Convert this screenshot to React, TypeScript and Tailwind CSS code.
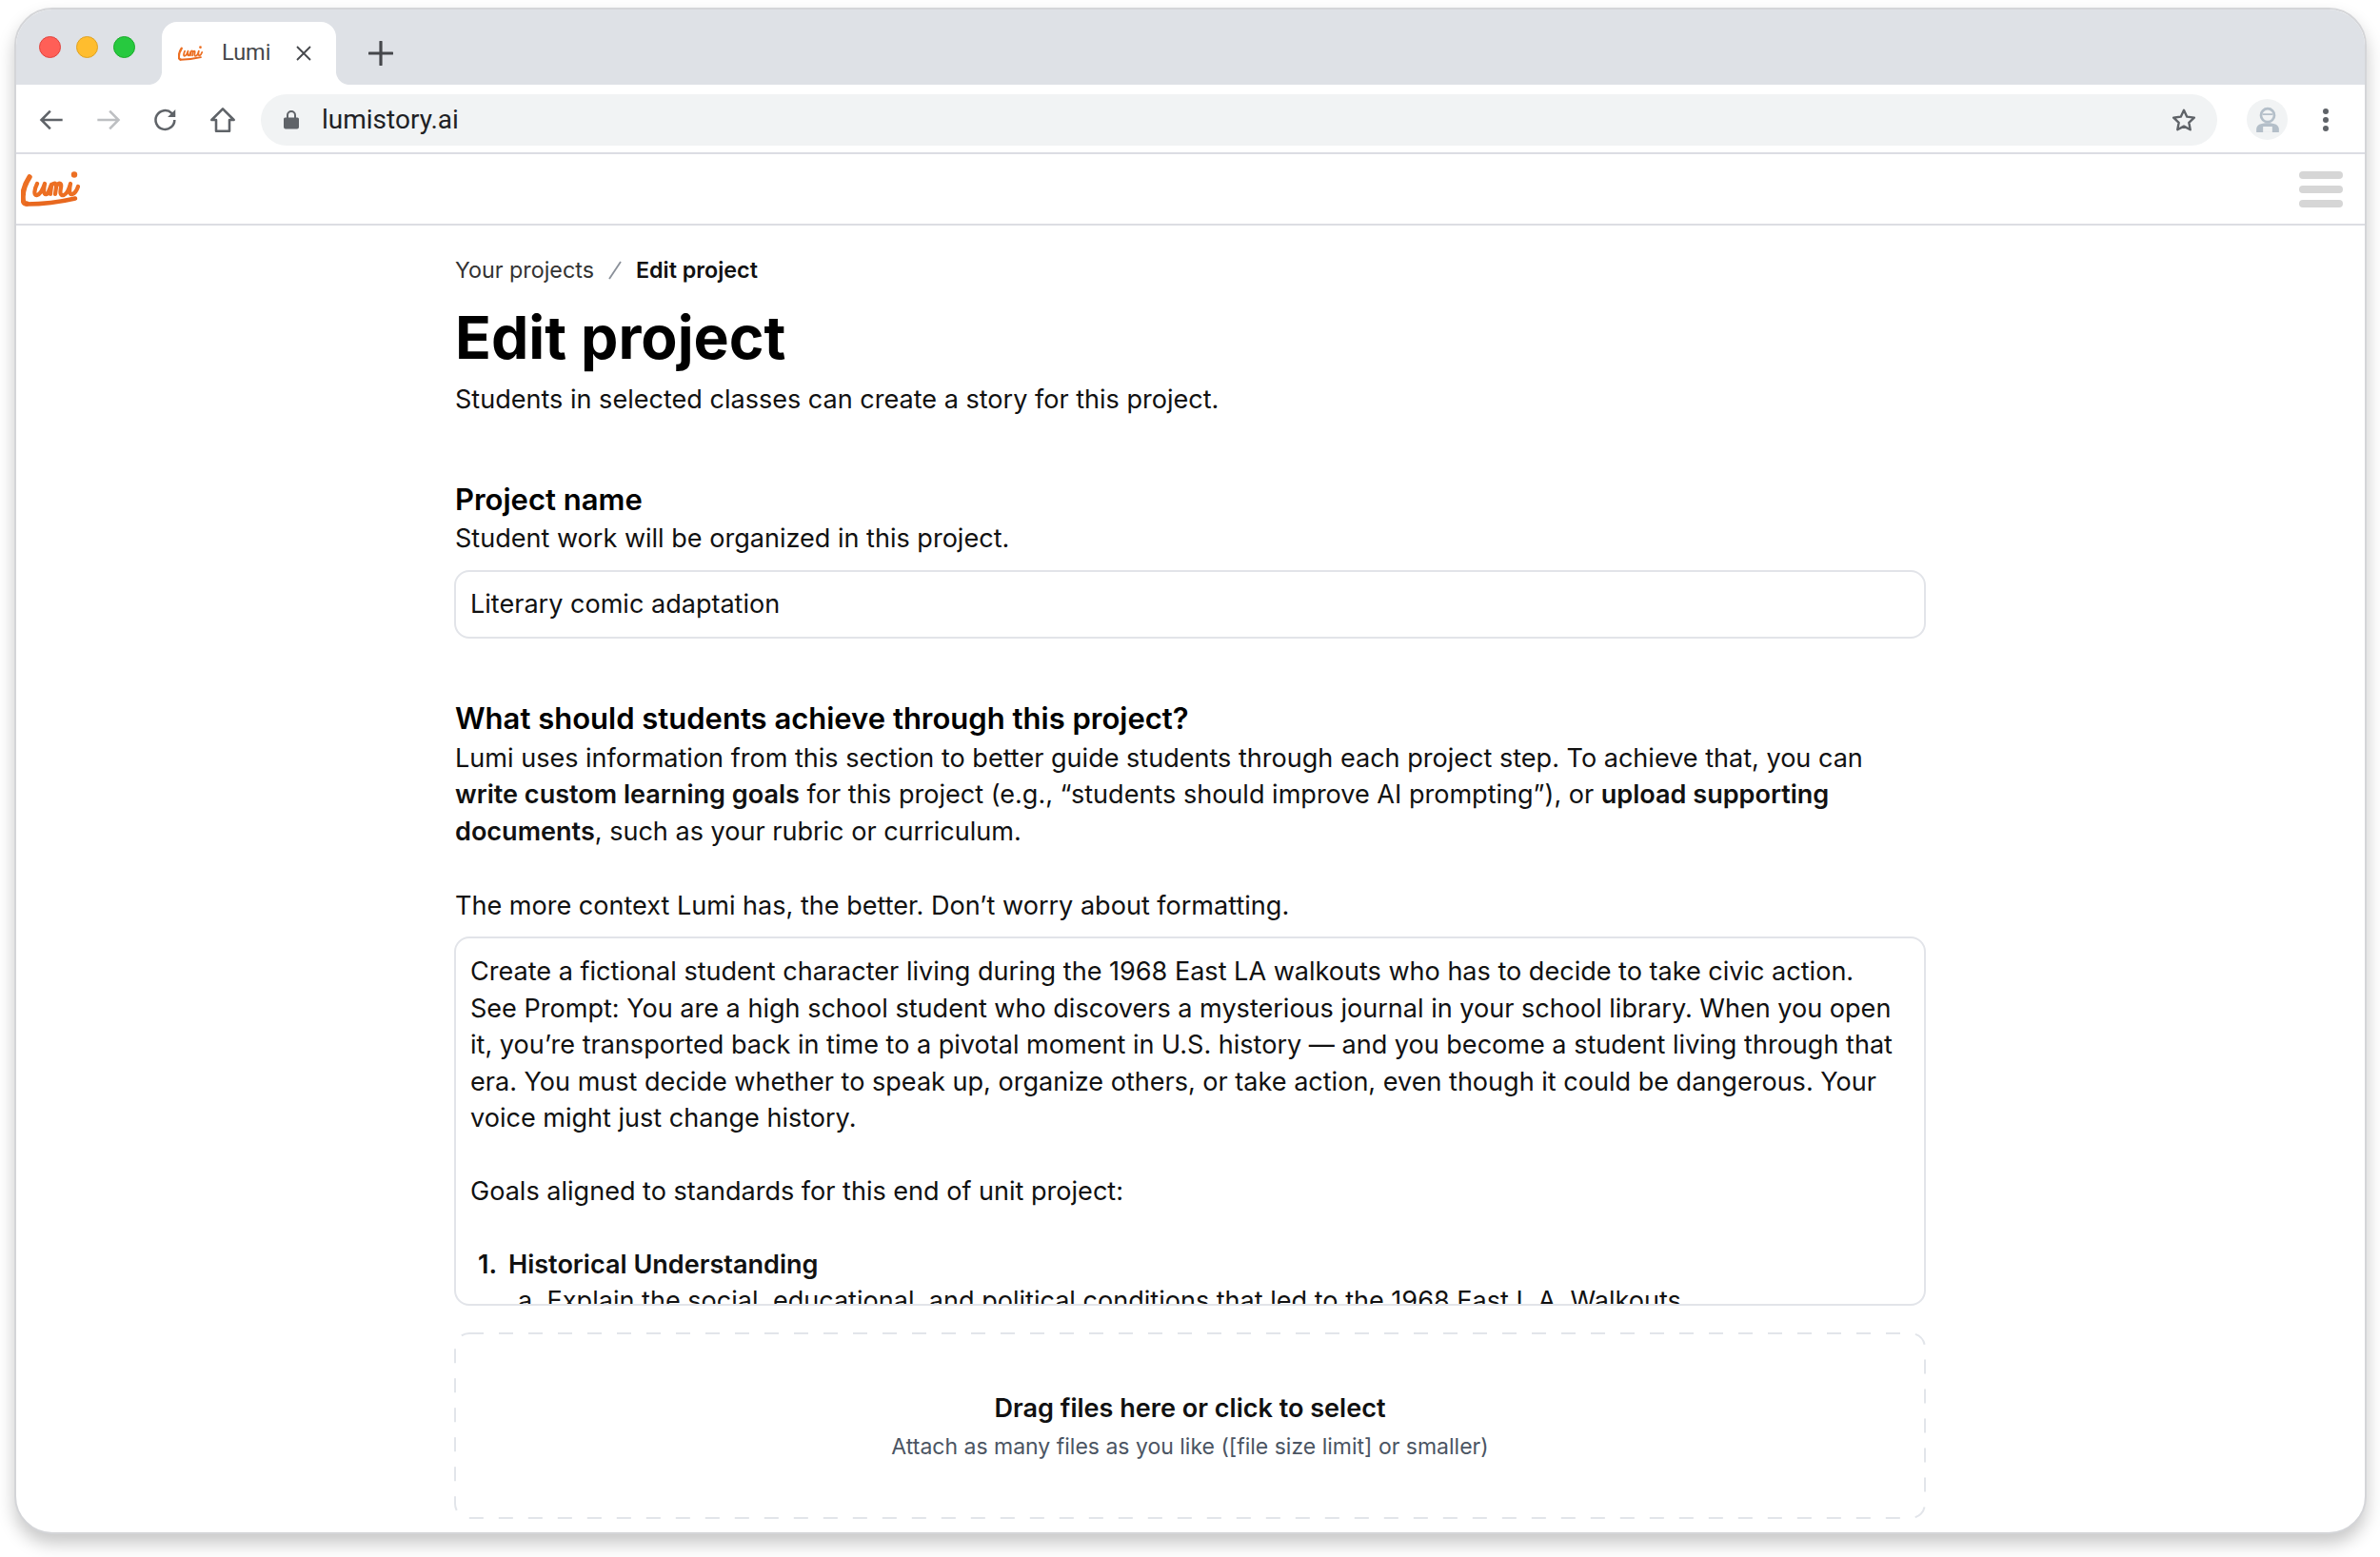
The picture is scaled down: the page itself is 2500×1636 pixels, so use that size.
import React from "react";

const Logo = ({ className }: { className: string }) => (
  <svg viewBox="0 0 62 37" className={className} fill="none" strokeLinecap="round" strokeLinejoin="round">
    <path d="M9 6 C5 12 2 20 2 27 C2 32 3 34 6 34" stroke="#ec6f23" strokeWidth="5.500" />
    <path d="M17 13 C14 19 13 26 17 25 C20 24 23 19 25 13 C24 18 23 25 27 24 C29 23 30 18 32 14 C32 18 31 21 31 24 M32 15 C35 11 38 12 37 17 L36 24 M37 16 C40 11 43 12 42 17 C41 22 41 26 45 25 C48 24 50 20 52 13 C51 18 50 25 54 24 C57 23 59 19 60 16" stroke="#ec6f23" strokeWidth="4.200" />
    <circle cx="56" cy="3.500" r="3.200" fill="#ec6f23" />
    <path d="M6 34.500 C22 34.500 42 32 57 28.500" stroke="#e8681f" strokeWidth="4.500" />
  </svg>
);

export default function App() {
  return (
    <div className="h-[1636px] w-[2500px] overflow-hidden bg-white pt-[8px] pl-[15px] font-['Inter',sans-serif] text-[#111]">
      <div className="flex h-[1604px] w-[2471px] flex-col overflow-hidden rounded-[40px] border-2 border-[#d4d5d8] bg-white shadow-[0_10px_18px_rgba(0,0,0,0.22)]">
        <div className="flex h-[79px] shrink-0 bg-[#dee1e6]">
          <div className="flex items-center gap-[16px] pl-[24px]">
            <span className="h-[23px] w-[23px] rounded-full border border-[#e0443e] bg-[#ff5f57]" />
            <span className="h-[23px] w-[23px] rounded-full border border-[#dea123] bg-[#ffbd2e]" />
            <span className="h-[23px] w-[23px] rounded-full border border-[#1aab29] bg-[#27c93f]" />
          </div>
          <div className="relative mt-[13px] ml-[28px] flex h-[66px] w-[183px] items-center rounded-t-[16px] bg-white pl-[17px]">
            <span className="absolute bottom-0 -left-[12px] h-[12px] w-[12px] bg-white" />
            <span className="absolute bottom-0 -left-[14px] h-[14px] w-[14px] rounded-br-[14px] bg-[#dee1e6]" />
            <span className="absolute -right-[12px] bottom-0 h-[12px] w-[12px] bg-white" />
            <span className="absolute -right-[14px] bottom-0 h-[14px] w-[14px] rounded-bl-[14px] bg-[#dee1e6]" />
            <Logo className="h-[16px] w-[26px]" />
            <span className="ml-[20px] font-['Roboto',sans-serif] text-[23.500px] text-[#45474b]">Lumi</span>
            <svg viewBox="0 0 16 16" className="ml-[27px] h-[16px] w-[16px]" stroke="#45474b" strokeWidth="1.8"><path d="M1 1 15 15M15 1 1 15" /></svg>
          </div>
          <svg viewBox="0 0 26 26" className="mt-[33px] ml-[34px] h-[26px] w-[26px]" stroke="#45474b" strokeWidth="3.2" strokeLinecap="round"><path d="M13 1v24M1 13h24" /></svg>
        </div>
        <div className="flex h-[73px] shrink-0 items-center border-b-2 border-[#dcdde3] bg-white pt-[2px]">
          <svg viewBox="0 0 24 24" className="ml-[23px] h-[28px] w-[28px]" fill="none" stroke="#5f6368" strokeWidth="2.2"><path d="M22 12H3M11 4l-8 8 8 8" /></svg>
          <svg viewBox="0 0 24 24" className="ml-[32px] h-[28px] w-[28px]" fill="none" stroke="#bdbfc2" strokeWidth="2.2"><path d="M2 12h19M13 4l8 8-8 8" /></svg>
          <svg viewBox="0 0 24 24" className="ml-[32px] h-[28px] w-[28px]" fill="none" stroke="#5f6368" strokeWidth="2.2"><path d="M20 12a8.5 8.5 0 1 1-2.600-6.100L20 8.400" /><path d="M20.800 2.500v7h-7" fill="#5f6368" stroke="none" /></svg>
          <svg viewBox="0 0 24 24" className="ml-[32px] h-[28px] w-[28px]" fill="none" stroke="#5f6368" strokeWidth="2.2"><path d="M12 2 2 12h4v10h12V12h4z" strokeLinejoin="round" /></svg>
          <div className="ml-[26px] flex h-[54px] w-[2055px] items-center rounded-full bg-[#f1f3f4] pr-[22px] pl-[24px]">
            <svg viewBox="0 0 16 20" className="h-[21px] w-[16px]"><path d="M3 8V5.500a5 5 0 0 1 10 0V8h1.500a1.500 1.500 0 0 1 1.500 1.500V18a2 2 0 0 1-2 2H2a2 2 0 0 1-2-2V9.500A1.500 1.500 0 0 1 1.500 8zm2 0h6V5.500a3 3 0 0 0-6 0z" fill="#5f6368" /></svg>
            <span className="ml-[24px] flex-1 font-['Roboto',sans-serif] text-[28px] text-[#202124]">lumistory.ai</span>
            <svg viewBox="0 0 24 24" className="h-[26px] w-[26px]" fill="none" stroke="#5f6368" strokeWidth="2.2" strokeLinejoin="round"><path d="M12 2.500l3 6.400 7 .9-5.100 4.800 1.300 6.900-6.200-3.400-6.200 3.400 1.300-6.900L2 9.800l7-.9z" /></svg>
          </div>
          <div className="ml-[31px] flex h-[43px] w-[43px] items-center justify-center rounded-full bg-[#f1f3f4]">
            <svg viewBox="0 0 24 26" className="h-[28px] w-[26px]">
              <circle cx="12" cy="8.500" r="6.500" fill="none" stroke="#b4bfc9" strokeWidth="2.500" />
              <path d="M7 7.500h10" stroke="#b4bfc9" strokeWidth="1.500" />
              <path d="M1 25v-3c0-4 4-6 11-6s11 2 11 6v3z" fill="#b4bfc9" />
              <rect x="7.500" y="19.500" width="9" height="5.500" fill="#f1f3f4" />
            </svg>
          </div>
          <div className="ml-[37px] flex flex-col gap-[3px]">
            <span className="h-[6px] w-[6px] rounded-full bg-[#5f6368]" />
            <span className="h-[6px] w-[6px] rounded-full bg-[#5f6368]" />
            <span className="h-[6px] w-[6px] rounded-full bg-[#5f6368]" />
          </div>
        </div>
        <div className="flex h-[75px] shrink-0 items-center justify-between border-b-2 border-[#dcdde3] pr-[23px] pl-[5px]">
          <Logo className="h-[37px] w-[62px]" />
          <div className="flex flex-col gap-[7px]">
            <span className="h-[8px] w-[46px] rounded-full bg-[#d6d6d6]" />
            <span className="h-[8px] w-[46px] rounded-full bg-[#d6d6d6]" />
            <span className="h-[8px] w-[46px] rounded-full bg-[#d6d6d6]" />
          </div>
        </div>
        <div className="min-h-0 flex-1 overflow-hidden pl-[461px] text-[27.050px] leading-[38.400px]">
          <div className="w-[1545px]">
            <div className="mt-[31px] flex items-center text-[23.300px] leading-[32px]">
              <span className="text-[#333]">Your projects</span>
              <svg viewBox="0 0 16 24" className="mx-[14px] h-[24px] w-[16px]" stroke="#8a9099" strokeWidth="1.800"><path d="M14 3 2 21" /></svg>
              <span className="font-semibold text-[#111]">Edit project</span>
            </div>
            <h1 className="mt-[22px] text-[62.500px] leading-[64px] font-bold text-black">Edit project</h1>
            <p className="mt-[15px]">Students in selected classes can create a story for this project.</p>
            <h2 className="mt-[66px] text-[31px] leading-[40px] font-semibold text-black">Project name</h2>
            <p className="mt-[2px]">Student work will be organized in this project.</p>
            <div className="mt-[13px] -ml-px flex h-[72px] w-[1546px] items-center rounded-[16px] border-2 border-[#e2e4e9] px-[15px]">Literary comic adaptation</div>
            <h2 className="mt-[64px] text-[31px] leading-[40px] font-semibold text-black">What should students achieve through this project?</h2>
            <p className="mt-[3px]">
              Lumi uses information from this section to better guide students through each project step. To achieve that, you can <b className="font-semibold">write custom learning goals</b> for this project (e.g., “students should improve AI prompting”), or <b className="font-semibold">upload supporting documents</b>, such as your rubric or curriculum.
            </p>
            <p className="mt-[40px]">The more context Lumi has, the better. Don’t worry about formatting.</p>
            <div className="mt-[13px] -ml-px h-[388px] w-[1546px] overflow-hidden rounded-[16px] border-2 border-[#e2e4e9] px-[15px] pt-[16px]">
              <p>Create a fictional student character living during the 1968 East LA walkouts who has to decide to take civic action.</p>
              <p>See Prompt: You are a high school student who discovers a mysterious journal in your school library. When you open it, you’re transported back in time to a pivotal moment in U.S. history — and you become a student living through that era. You must decide whether to speak up, organize others, or take action, even though it could be dangerous. Your voice might just change history.</p>
              <p className="mt-[38.400px]">Goals aligned to standards for this end of unit project:</p>
              <p className="mt-[38.400px] flex pl-[8px] font-semibold"><span className="w-[32px]">1.</span><span>Historical Understanding</span></p>
              <p className="pl-[50px]">a. Explain the social, educational, and political conditions that led to the 1968 East L.A. Walkouts</p>
            </div>
            <div className="relative mt-[28px] -ml-px flex h-[196px] w-[1546px] flex-col items-center justify-center">
              <svg className="absolute inset-0 h-full w-full" fill="none">
                <rect x="1" y="1" width="1544" height="194" rx="15" stroke="#e2e5ea" strokeWidth="2" strokeDasharray="15 16" />
              </svg>
              <p className="font-semibold text-[#111]">Drag files here or click to select</p>
              <p className="mt-[5px] text-[23px] leading-[32px] text-[#4b5563]">Attach as many files as you like ([file size limit] or smaller)</p>
            </div>
          </div>
        </div>
      </div>
    </div>
  );
}
